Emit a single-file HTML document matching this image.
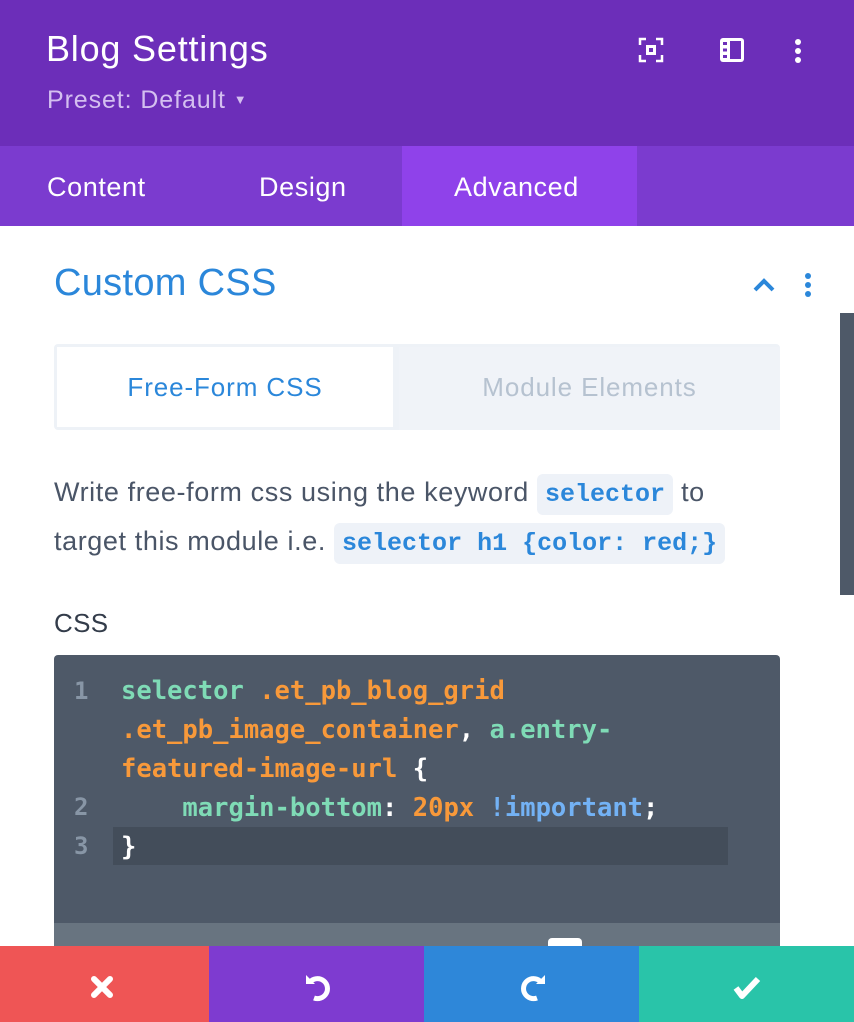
<!DOCTYPE html>
<html><head><meta charset="utf-8"><style>
*{margin:0;padding:0;box-sizing:border-box}
body{width:854px;height:1022px;overflow:hidden;background:#fff;font-family:"Liberation Sans",sans-serif;position:relative}
.abs{position:absolute}
.hdr{left:0;top:0;width:854px;height:146px;background:#6c2eb9}
.tabs{left:0;top:146px;width:854px;height:80px;background:#7b3bcf}
.tab{position:absolute;top:0;height:80px;line-height:82px;color:#fff;font-size:27px;letter-spacing:0.6px}
.mono{font-family:"DejaVu Sans Mono",monospace;font-weight:bold;font-size:25.5px;white-space:pre;position:absolute;left:121px}
.g{color:#7fdbb6}.o{color:#f8993a}.w{color:#fff}.b{color:#73b2f5}
.ln{position:absolute;left:74px;color:#8896a6;font-family:"DejaVu Sans Mono",monospace;font-weight:bold;font-size:24px}
code{font-family:"Liberation Mono",monospace;font-weight:bold;color:#2b87da;background:#eef2f8;border-radius:6px;font-size:25px;padding:6px 8px;letter-spacing:0}
</style></head><body>
<div class="abs hdr"></div>
<div class="abs" style="left:46px;top:28px;color:#fff;font-size:36px;letter-spacing:0.8px">Blog Settings</div>
<div class="abs" style="left:47px;top:86px;color:#d4bff0;font-size:25px;letter-spacing:0.9px">Preset: Default <span style="font-size:13px;vertical-align:4px">▼</span></div>
<svg class="abs" style="left:638px;top:37px" width="26" height="26" viewBox="0 0 26 26" fill="none" stroke="#fff" stroke-width="2.5"><path d="M2 8V2h6M18 2h6v6M24 18v6h-6M8 24H2v-6"/><rect x="8" y="8" width="10" height="10" fill="#fff" stroke="none"/><rect x="11" y="11" width="4" height="4" fill="#6c2eb9" stroke="none"/></svg>
<svg class="abs" style="left:720px;top:38px" width="24" height="24" viewBox="0 0 24 24"><rect x="0" y="0" width="24" height="24" rx="3" fill="#fff"/><rect x="10" y="3" width="11" height="18" fill="#6c2eb9"/><rect x="3" y="4" width="4" height="3" fill="#6c2eb9"/><rect x="3" y="10.5" width="4" height="3" fill="#6c2eb9"/><rect x="3" y="17" width="4" height="3" fill="#6c2eb9"/></svg>
<svg class="abs" style="left:792px;top:38px" width="12" height="26" viewBox="0 0 12 26" fill="#fff"><circle cx="6" cy="4" r="3"/><circle cx="6" cy="13" r="3"/><circle cx="6" cy="22" r="3"/></svg>
<div class="abs tabs"></div>
<div class="abs" style="left:402px;top:146px;width:235px;height:80px;background:#8f42ea"></div>
<div class="tab" style="left:47px;top:146px">Content</div>
<div class="tab" style="left:259px;top:146px">Design</div>
<div class="tab" style="left:454px;top:146px">Advanced</div>

<div class="abs" style="left:54px;top:262px;color:#2b87da;font-size:38px;letter-spacing:0.3px">Custom CSS</div>
<svg class="abs" style="left:752px;top:277px" width="24" height="16" viewBox="0 0 24 16"><path d="M3 13L12 4l9 9" fill="none" stroke="#2b87da" stroke-width="4"/></svg>
<svg class="abs" style="left:802px;top:272px" width="12" height="26" viewBox="0 0 12 26" fill="#2b87da"><circle cx="6" cy="4" r="3"/><circle cx="6" cy="13" r="3"/><circle cx="6" cy="22" r="3"/></svg>
<div class="abs" style="left:840px;top:313px;width:14px;height:282px;background:#4e5968"></div>

<div class="abs" style="left:54px;top:344px;width:726px;height:86px;background:#eef2f7;border-radius:4px"></div>
<div class="abs" style="left:57px;top:347px;width:336px;height:80px;background:#fff"></div>
<div class="abs" style="left:399px;top:347px;width:381px;height:83px;background:#f0f3f8"></div>
<div class="abs" style="left:57px;top:372px;width:336px;text-align:center;color:#2b87da;font-size:26px;letter-spacing:0.9px">Free-Form CSS</div>
<div class="abs" style="left:399px;top:372px;width:381px;text-align:center;color:#b6c2d0;font-size:26px;letter-spacing:0.9px">Module Elements</div>

<div class="abs" style="left:54px;top:469px;width:790px;color:#4a5567;font-size:27px;line-height:46px;letter-spacing:0.6px">Write free-form css using the keyword <code>selector</code> to<br>target this module i.e. <code>selector h1 {color: red;}</code></div>
<div class="abs" style="left:54px;top:608px;color:#333c4a;font-size:26px;letter-spacing:0.3px">CSS</div>

<div class="abs" style="left:54px;top:655px;width:726px;height:300px;background:#4e5968;border-radius:4px 4px 0 0"></div>
<div class="abs" style="left:54px;top:923px;width:726px;height:30px;background:#687480"></div>
<div class="abs" style="left:548px;top:938px;width:34px;height:12px;background:#fff;border-radius:4px"></div>
<div class="abs" style="left:113px;top:827px;width:615px;height:38px;background:#434d5a"></div>
<div class="ln" style="top:677px">1</div>
<div class="ln" style="top:793px">2</div>
<div class="ln" style="top:832px">3</div>
<div class="mono" style="top:676px"><span class="g">selector</span> <span class="o">.et_pb_blog_grid</span></div>
<div class="mono" style="top:715px"><span class="o">.et_pb_image_container</span><span class="w">,</span> <span class="g">a.entry-</span></div>
<div class="mono" style="top:754px"><span class="o">featured-image-url</span> <span class="w">{</span></div>
<div class="mono" style="top:793px">    <span class="g">margin-bottom</span><span class="w">:</span> <span class="o">20px</span> <span class="b">!important</span><span class="w">;</span></div>
<div class="mono" style="top:832px"><span class="w">}</span></div>

<div class="abs" style="left:0;top:946px;width:209px;height:76px;background:#ef5555"></div>
<div class="abs" style="left:209px;top:946px;width:215px;height:76px;background:#7e3bd0"></div>
<div class="abs" style="left:424px;top:946px;width:215px;height:76px;background:#2e87d9"></div>
<div class="abs" style="left:639px;top:946px;width:215px;height:76px;background:#29c4a9"></div>
<svg class="abs" style="left:89px;top:974px" width="26" height="26" viewBox="0 0 26 26"><path d="M5 5l16 16M21 5L5 21" stroke="#fff" stroke-width="6" stroke-linecap="round"/></svg>
<svg class="abs" style="left:302px;top:972px" width="32" height="30" viewBox="0 0 32 30" fill="none" stroke="#fff" stroke-width="5"><path d="M9 9a10 10 0 1 1 3 17"/><path d="M4 3l0 9 9 0z" fill="#fff" stroke="none"/></svg>
<svg class="abs" style="left:517px;top:972px" width="32" height="30" viewBox="0 0 32 30" fill="none" stroke="#fff" stroke-width="5"><path d="M23 9a10 10 0 1 0-3 17"/><path d="M28 3l0 9-9 0z" fill="#fff" stroke="none"/></svg>
<svg class="abs" style="left:732px;top:975px" width="30" height="26" viewBox="0 0 30 26"><path d="M4 13l6 8L26 4" fill="none" stroke="#fff" stroke-width="6" stroke-linejoin="round"/></svg>
</body></html>
